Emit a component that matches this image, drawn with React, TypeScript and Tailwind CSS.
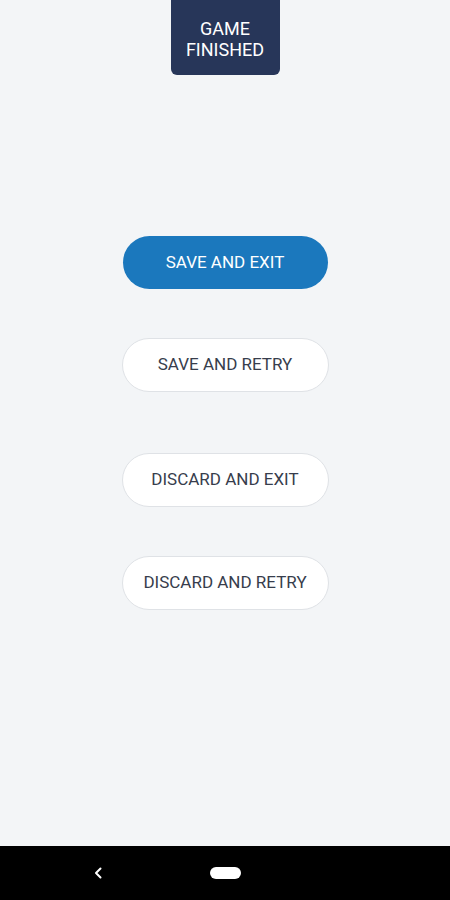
const OPTIONS = [
  { label: 'SAVE AND EXIT', primary: true, mt: 'mt-[161px]' },
  { label: 'SAVE AND RETRY', primary: false, mt: 'mt-[49px]' },
  { label: 'DISCARD AND EXIT', primary: false, mt: 'mt-[61px]' },
  { label: 'DISCARD AND RETRY', primary: false, mt: 'mt-[49px]' },
]

export default function App() {
  return (
    <div className="flex h-[900px] w-[450px] flex-col font-['Roboto',sans-serif]">
      <div className="flex h-[846px] flex-col items-center bg-[#f3f5f7]">
        <div className="flex h-[75px] w-[109px] flex-col items-center justify-center rounded-b-md bg-[#273659] pt-[2px] text-center text-[18px] leading-[21px] text-white">
          <span>GAME</span>
          <span>FINISHED</span>
        </div>

        {OPTIONS.map(({ label, primary, mt }) =>
          primary ? (
            <button
              key={label}
              className={`${mt} flex h-[53px] w-[205px] items-center justify-center rounded-full bg-[#1b78bd] text-[17px] text-white`}
            >
              {label}
            </button>
          ) : (
            <button
              key={label}
              className={`${mt} flex h-[54px] w-[207px] items-center justify-center rounded-full border border-[#dfe2e6] bg-white text-[17px] text-[#373d4c]`}
            >
              {label}
            </button>
          )
        )}
      </div>

      <div className="relative flex h-[54px] items-center bg-black">
        <svg className="absolute left-[93px] top-[21px]" width="10" height="12" viewBox="0 0 10 12">
          <path d="M7.5 1.5 L3 6 L7.5 10.5" fill="none" stroke="white" strokeWidth="2" strokeLinecap="round" strokeLinejoin="round" />
        </svg>
        <div className="absolute left-[210px] top-[21px] h-[12px] w-[31px] rounded-full bg-white" />
      </div>
    </div>
  )
}
